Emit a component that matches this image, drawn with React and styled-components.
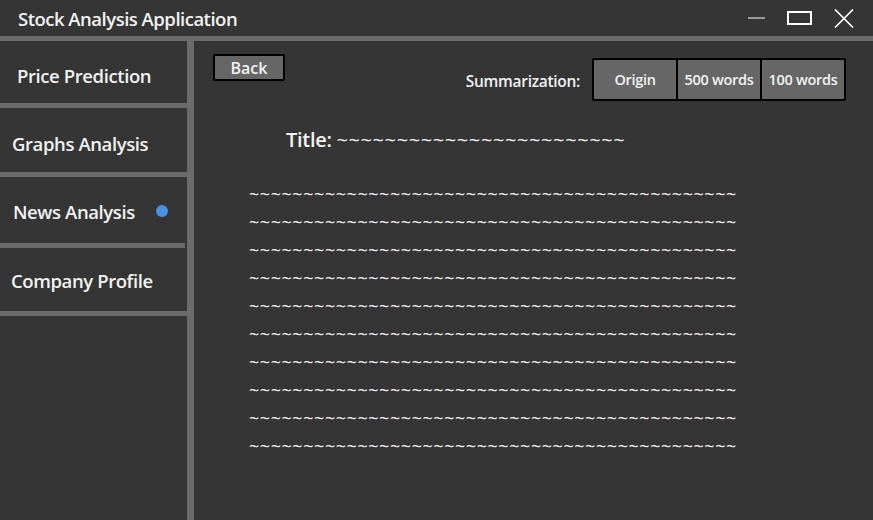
import React, { useState } from 'react'
import styled, { createGlobalStyle } from 'styled-components'

const GlobalStyle = createGlobalStyle`
    html, body {
        margin:0;
        padding:0;
        background:#353535;
    }
    body{
        font-family:"Open Sans", "Noto Sans", sans-serif;
        color:#f2f2f2;
    }
`;

export default function App() {
    const menu = [
        { name: "Price Prediction", indent: 17, h: 62, dy: 7 },
        { name: "Graphs Analysis", indent: 12, h: 64, dy: 7 },
        { name: "News Analysis", indent: 13, h: 66, dy: 2 },
        { name: "Company Profile", indent: 11, h: 63, dy: 2 },
    ];
    const modes = ["Origin", "500 words", "100 words"];
    const [active, setActive] = useState("News Analysis");
    const [mode, setMode] = useState("Origin");
    const lines = Array.from({ length: 10 }, () => "~".repeat(45));

    return (
        <Window>
            <GlobalStyle />
            <TitleBar>
                <AppTitle>Stock Analysis Application</AppTitle>
                <Controls>
                    <CtrlButton aria-label="minimize">
                        <svg width="18" height="2" viewBox="0 0 18 2"><path d="M0 1H17" stroke="#fff" strokeWidth="1" /></svg>
                    </CtrlButton>
                    <CtrlButton aria-label="maximize">
                        <svg width="26" height="15" viewBox="0 0 26 15"><rect x="1" y="1" width="23" height="12" fill="none" stroke="#fff" strokeWidth="2" /></svg>
                    </CtrlButton>
                    <CtrlButton aria-label="close">
                        <svg width="20" height="19" viewBox="0 0 20 19"><path d="M1 0.5L19 18.5M19 0.5L1 18.5" stroke="#fff" strokeWidth="1.6" /></svg>
                    </CtrlButton>
                </Controls>
            </TitleBar>
            <Body>
                <Sidebar>
                    {menu.map(({ name, indent, h, dy }) => (
                        <MenuItem key={name} $indent={indent} $h={h} $dy={dy} $active={active === name} onClick={() => setActive(name)}>
                            <span>{name}</span>
                            {active === name && <Dot />}
                        </MenuItem>
                    ))}
                </Sidebar>
                <Main>
                    <TopRow>
                        <BackButton>Back</BackButton>
                        <Summary>
                            <label>Summarization:</label>
                            <Segments>
                                {modes.map((m) => (
                                    <Segment key={m} onClick={() => setMode(m)}>{m}</Segment>
                                ))}
                            </Segments>
                        </Summary>
                    </TopRow>
                    <ArticleTitle>Title: <Tilde>{"~".repeat(24)}</Tilde></ArticleTitle>
                    <Article>
                        {lines.map((l, i) => (
                            <Line key={i}>{l}</Line>
                        ))}
                    </Article>
                </Main>
            </Body>
        </Window>
    )
}

const Window = styled.div`
    width:873px;
    height:520px;
    display:flex;
    flex-direction:column;
    background:#353535;
    overflow:hidden;
`;

const TitleBar = styled.div`
    height:36px;
    flex-shrink:0;
    display:flex;
    align-items:center;
    justify-content:space-between;
    padding:0 19px 0 18px;
    border-bottom:5px solid #6b6b6b;
`;

const AppTitle = styled.div`
    font-size:18.5px;
    font-weight:600;
    letter-spacing:-0.5px;
    padding-top:1px;
`;

const Controls = styled.div`
    display:flex;
    align-items:center;
    gap:21px;
`;

const CtrlButton = styled.div`
    display:flex;
    align-items:center;
    justify-content:center;
    svg{ display:block; }
`;

const Body = styled.div`
    flex:1;
    display:flex;
    min-height:0;
`;

const Sidebar = styled.div`
    width:187px;
    flex-shrink:0;
    display:flex;
    flex-direction:column;
    border-right:7px solid #6b6b6b;
`;

const MenuItem = styled.div`
    height:${p => p.$h + 5}px;
    box-sizing:border-box;
    flex-shrink:0;
    display:flex;
    align-items:center;
    justify-content:space-between;
    padding:${p => p.$dy}px 17px 0 ${p => p.$indent}px;
    font-size:18.5px;
    font-weight:600;
    letter-spacing:-0.4px;
    border-bottom:5px solid #6b6b6b;
    margin-right:${p => p.$active ? "2px" : "0"};
    cursor:pointer;
`;

const Dot = styled.span`
    width:12px;
    height:12px;
    border-radius:50%;
    background:#4a90e2;
`;

const Main = styled.div`
    flex:1;
    display:flex;
    flex-direction:column;
    padding:13px 27px 0 19px;
`;

const TopRow = styled.div`
    display:flex;
    justify-content:space-between;
    align-items:flex-start;
`;

const BackButton = styled.button`
    width:72px;
    height:27px;
    background:#666;
    border:2px solid #000;
    border-radius:2px;
    color:#f2f2f2;
    font-family:inherit;
    font-size:16px;
    font-weight:600;
    padding:0;
    line-height:1;
`;

const Summary = styled.div`
    margin-top:4px;
    display:flex;
    align-items:center;
    gap:12px;
    label{
        font-size:15.5px;
        font-weight:600;
        letter-spacing:-0.3px;
        padding-top:3px;
    }
`;

const Segments = styled.div`
    display:flex;
    border:2px solid #000;
    border-radius:2px;
    height:43px;
    box-sizing:border-box;
`;

const Segment = styled.div`
    width:82px;
    display:flex;
    align-items:center;
    justify-content:center;
    background:#666;
    font-size:14.5px;
    font-weight:600;
    letter-spacing:-0.3px;
    & + &{
        border-left:2px solid #000;
    }
`;

const ArticleTitle = styled.div`
    margin:25px 0 0 73px;
    font-size:20px;
    font-weight:600;
    letter-spacing:-0.3px;
`;

const Tilde = styled.span`
    font-weight:400;
    letter-spacing:0.6px;
`;

const Article = styled.div`
    margin:27px 0 0 36px;
    display:flex;
    flex-direction:column;
`;

const Line = styled.div`
    font-size:18px;
    letter-spacing:0.55px;
    line-height:28px;
    white-space:nowrap;
`;
